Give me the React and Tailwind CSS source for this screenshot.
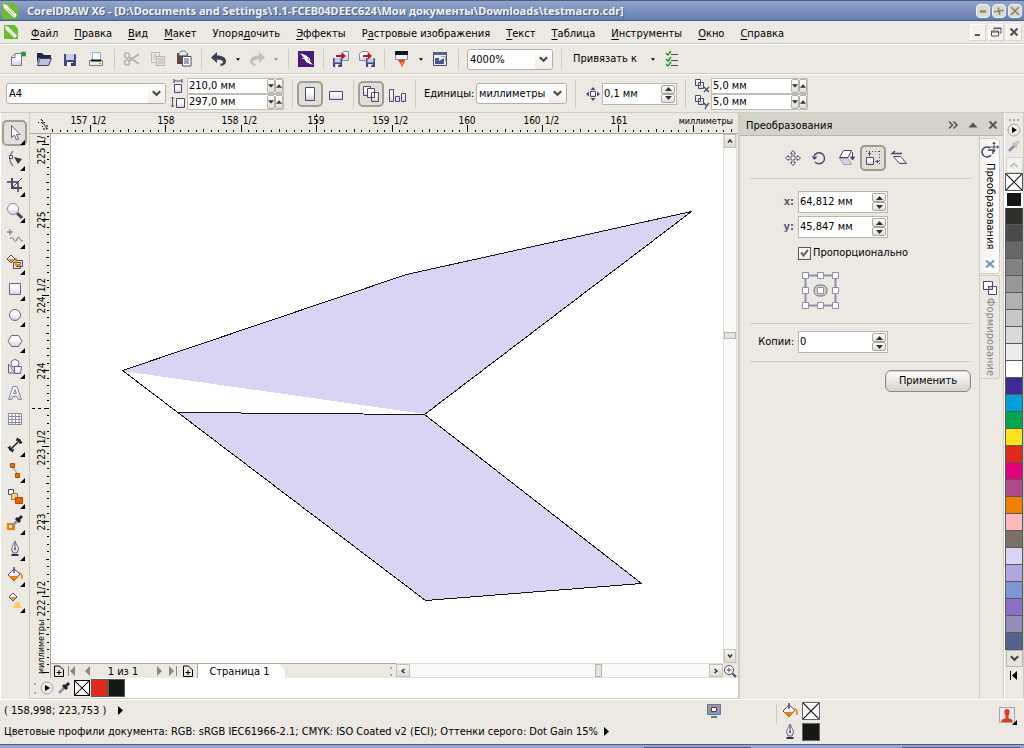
import React from "react";

const METAL = "url(#metal)";
const INK = "#4a4a6a";

function Ico({ size = 18, children, className = "" }) {
  return (
    <svg width={size} height={size} viewBox={`0 0 ${size} ${size}`} fill="none" className={`shrink-0 ${className}`} aria-hidden="true">
      {children}
    </svg>
  );
}

function Chevron({ className = "" }) {
  return (
    <svg width="9" height="7" viewBox="0 0 9 7" className={className} aria-hidden="true">
      <path d="M0.8 1.2 4.5 4.8 8.2 1.2" fill="none" stroke="#444" strokeWidth="2" />
    </svg>
  );
}

function Tri({ up, color = "#333", w = 7, h = 4 }) {
  return (
    <svg width={w} height={h} viewBox="0 0 7 4" aria-hidden="true">
      <path d={up ? "M0 4 3.5 0 7 4z" : "M0 0 3.5 4 7 0z"} fill={color} />
    </svg>
  );
}

function Sep({ className = "" }) {
  return <div className={`h-5 w-px shrink-0 bg-[#cfccc3] ${className}`} />;
}

function Tool({ label, children, className = "w-[26px]" }) {
  return (
    <button type="button" aria-label={label} className={`flex h-[26px] shrink-0 items-center justify-center ${className}`}>
      {children}
    </button>
  );
}

function Combo({ label, id, options, className = "" }) {
  return (
    <div className={`grid h-[21px] shrink-0 items-center rounded-[3px] border border-[#b2afa6] bg-white ${className}`}>
      <select id={id} aria-label={label} className="col-start-1 row-start-1 h-full w-full appearance-none bg-transparent pt-px pl-[2px] outline-none">
        {options.map((o) => (
          <option key={o}>{o}</option>
        ))}
      </select>
      <span className="pointer-events-none col-start-1 row-start-1 flex h-full w-[17px] items-center justify-center justify-self-end rounded-r-[3px] bg-gradient-to-b from-white to-[#f0eee9]">
        <Chevron />
      </span>
    </div>
  );
}

function SpinBox({ label, id, value, className = "" }) {
  return (
    <div className={`flex h-[22px] shrink-0 border border-[#bab7ae] bg-white p-px ${className}`}>
      <input id={id} aria-label={label} defaultValue={value} className="min-w-0 flex-1 bg-transparent outline-none" />
      <div className="flex w-[14px] flex-col">
        {[true, false].map((up) => (
          <button
            key={String(up)}
            type="button"
            aria-label={up ? "Увеличить" : "Уменьшить"}
            className="flex flex-1 items-center justify-center rounded-[2px] border border-[#a9a69d] bg-gradient-to-b from-white to-[#e0ddd6]"
          >
            <Tri up={up} />
          </button>
        ))}
      </div>
    </div>
  );
}

function WideSpin({ label, value }) {
  return (
    <div className="flex h-4 items-center border border-[#c1beb5] bg-white">
      <input aria-label={label} defaultValue={value} className="min-w-0 flex-1 bg-transparent pt-px pl-px leading-3 outline-none" />
      {[false, true].map((up) => (
        <button
          key={String(up)}
          type="button"
          aria-label={up ? "Увеличить" : "Уменьшить"}
          className="flex h-[14px] w-2 items-center justify-center rounded-[2px] border border-[#b2afa6] bg-gradient-to-b from-white to-[#e0ddd6]"
        >
          <Tri up={up} w={6} h={4} />
        </button>
      ))}
    </div>
  );
}

/* ---------- title and menu ---------- */

function Leaf({ size }) {
  return (
    <svg width={size} height={size} viewBox="0 0 16 16" className="shrink-0" aria-hidden="true">
      <path d="M0 0h12l4 4v12H0z" fill="#6cbd2c" />
      <path d="M1 1 5 2 14 11 15 15 11 14 2 5z" fill="#fff" />
      <path d="M4 5 12 13M5 3 13 11" stroke="#8fb874" strokeWidth=".7" />
      <path d="M13 15 15 15 15 13z" fill="#2f7d1a" />
    </svg>
  );
}

function TitleBar() {
  const icons = [
    ["Свернуть", "M3 6h6M3 7h6"],
    ["Восстановить", "M5.500 2.500v4H1M6.500 10V5.500H11"],
    ["Закрыть", "M2 2 10 10M10 2 2 10"],
  ];
  return (
    <header className="flex h-[21px] items-center border-t border-b border-[#4a5d87] bg-gradient-to-b from-[#93a5cb] via-[#7b90bc] to-[#6580ae] pr-[2px] pl-[2px]">
      <Leaf size={16} />
      <h1 className="min-w-0 flex-1 truncate pl-[9px] font-['Noto_Sans',sans-serif] text-[11px] font-bold text-[#f4f3ee] [text-shadow:1px_1px_0_#4a5d87]">
        CorelDRAW X6 - [D:\Documents and Settings\1.1-FCEB04DEEC624\Мои документы\Downloads\testmacro.cdr]
      </h1>
      <div className="flex gap-[2px]">
        {icons.map(([l, d]) => (
          <button key={l} type="button" aria-label={l} className="flex h-[14px] w-[14px] items-center justify-center rounded-[4px] border border-[#f4f2ec] bg-[#dcd9d1]">
            <Ico size={12}>
              <path d={d} stroke="#8b8778" strokeWidth="1.6" />
            </Ico>
          </button>
        ))}
      </div>
    </header>
  );
}

const MENU = [
  ["", "Ф", "айл"],
  ["", "П", "равка"],
  ["", "В", "ид"],
  ["", "М", "акет"],
  ["Упоря", "д", "очить"],
  ["", "Э", "ффекты"],
  ["Р", "а", "стровые изображения"],
  ["", "Т", "екст"],
  ["", "Т", "аблица"],
  ["", "И", "нструменты"],
  ["", "О", "кно"],
  ["", "С", "правка"],
];

function MenuBar() {
  const icons = [
    ["Свернуть документ", <path key="a" d="M3 9h5" stroke="#555" strokeWidth="2" />],
    ["Восстановить документ", <path key="b" d="M4 3.5V2h7v5H9.500M4 2.500h7M1.500 5h7v5h-7zM1.500 6h7" stroke="#555" />],
    ["Закрыть документ", <path key="c" d="M2.500 2.500 9.500 9.500M9.500 2.500 2.500 9.500" stroke="#555" strokeWidth="2.200" />],
  ];
  return (
    <nav className="flex h-[23px] items-center border-b border-[#cfccc3] pr-[2px] pl-1">
      <Leaf size={14} />
      <ul className="flex flex-1 items-center gap-4 pt-[3px] pl-[13px]">
        {MENU.map(([a, b, c]) => (
          <li key={a + b + c}>
            <button type="button" className="whitespace-nowrap">
              {a}
              <span className="underline underline-offset-2">{b}</span>
              {c}
            </button>
          </li>
        ))}
      </ul>
      <div className="flex gap-[2px]">
        {icons.map(([l, p]) => (
          <button key={l} type="button" aria-label={l} className="flex h-[17px] w-4 items-center justify-center border border-[#d8d5cd] border-t-white border-l-white bg-[#f5f3ee]">
            <Ico size={12}>{p}</Ico>
          </button>
        ))}
      </div>
    </nav>
  );
}

/* ---------- standard toolbar ---------- */

const floppy = (x, y, s = 1) => (
  <g transform={`translate(${x} ${y}) scale(${s})`}>
    <path d="M0 0h11l1 1v11H0z" fill="#3d4a86" />
    <path d="M2 0h8v6H2z" fill="#c9cde0" />
    <path d="M3 8h6v4H3z" fill="#fff" />
    <path d="M7 9h2v3H7z" fill="#222a55" />
  </g>
);

function StandardBar() {
  return (
    <div role="toolbar" aria-label="Стандарт" className="flex h-[30px] items-center border-t border-b border-t-white border-b-[#cfccc3] pl-[5px]">
      <Tool label="Создать">
        <Ico>
          <path d="M2.500 7 6 3.500h6.500v12h-10z" fill={METAL} stroke="#77778f" />
          <path d="M2.500 7.500H6V4" stroke="#77778f" />
          <circle cx="14.500" cy="4" r="2.500" fill="#2f9a2a" />
          <path d="M12 1.500 17 6.500M17 1.500 12 6.500" stroke="#2f9a2a" />
        </Ico>
      </Tool>
      <Tool label="Открыть">
        <Ico>
          <path d="M2 3h5l2 2h7v3H4L2 13z" fill="#20284a" />
          <path d="M5 8.500h11.500l-3 7H2.500z" fill="#b9bfdc" stroke="#3a4266" />
        </Ico>
      </Tool>
      <Tool label="Сохранить">
        <Ico>{floppy(3, 4)}</Ico>
      </Tool>
      <Tool label="Печать">
        <Ico>
          <path d="M5.500 2.500h8v8h-8z" fill="#f4fbfc" stroke="#8fb6bc" />
          <path d="M2.500 10.500h13v5h-13z" fill="#f0eee6" stroke="#77757a" />
          <path d="M4 10.500h10" stroke="#111" strokeWidth="2" />
          <path d="M12 13.500h2" stroke="#7dbb23" />
        </Ico>
      </Tool>
      <Sep className="mr-1 ml-[5px]" />
      <Tool label="Вырезать">
        <Ico>
          <circle cx="4" cy="5.500" r="2.500" stroke="#b5b3ae" strokeWidth="1.500" />
          <circle cx="4" cy="12.500" r="2.500" stroke="#b5b3ae" strokeWidth="1.500" />
          <path d="M6 7 16 14M6 11 16 4" stroke="#b5b3ae" strokeWidth="2" />
        </Ico>
      </Tool>
      <Tool label="Копировать">
        <Ico>
          <path d="M2.500 2.500h8v10h-8zM4 5h4M4 7h4M4 9h3" stroke="#c0beb9" />
          <path d="M7.500 6.500h8v9h-8z" fill="#e4e2dc" stroke="#b5b3ae" />
          <path d="M9 9h5M9 11h5M9 13h5" stroke="#b5b3ae" />
        </Ico>
      </Tool>
      <Tool label="Вставить">
        <Ico>
          <path d="M2 3h11v11H2z" fill="#5f4a3a" />
          <path d="M4 3.500 6 1h4l2 2.500v2H4z" fill="#e3efe6" stroke="#789" />
          <path d="M7.500 6.500H16v9.500H7.500z" fill="#fff" stroke={INK} />
          <path d="M9 9h5M9 11h5M9 13h5" stroke={INK} />
        </Ico>
      </Tool>
      <Sep className="mr-1 ml-[4px]" />
      <Tool label="Отменить">
        <Ico>
          <path d="M1 7.500 7 2v3.500c6 0 9 2.500 9 6 0 2.500-2 4-5.500 4.500v-2c2-.5 2.500-1.300 2.500-2.200C13 10.500 11 9.500 7 9.500V13z" fill="#3d4158" />
        </Ico>
      </Tool>
      <Tool label="Список отмены" className="w-3"><Tri w={4} h={3} color="#000" /></Tool>
      <Tool label="Вернуть">
        <Ico>
          <path d="M17 7.500 11 2v3.500c-6 0-9 2.500-9 6 0 2.500 2 4 5.500 4.500v-2c-2-.5-2.500-1.300-2.500-2.200C5 10.500 7 9.500 11 9.500V13z" fill="#c2c1be" />
        </Ico>
      </Tool>
      <Tool label="Список возврата" className="w-3"><Tri w={4} h={3} color="#888" /></Tool>
      <Sep className="mr-1 ml-[6px]" />
      <Tool label="Поиск содержимого">
        <Ico>
          <path d="M1 1h16v16H1z" fill="#4a1a78" />
          <path d="M3 3l5 2 2 1 1 3 5 6-5-2-2-1-1-3z" fill="#fff" />
          <path d="M5 8l3 1 1 2M9 7l3 1 1 3" stroke="#fff" />
        </Ico>
      </Tool>
      <Sep className="mr-1 ml-[4px]" />
      <Tool label="Импорт">
        <Ico>
          <path d="M9.500 3.500 12 1.500h4.500v9h-7z" fill={METAL} stroke="#8a8aa0" />
          {floppy(1, 8, 0.75)}
          <path d="M4 5h6V2.500L14 6l-4 3.500V7H4z" fill="#c2151b" />
        </Ico>
      </Tool>
      <Tool label="Экспорт">
        <Ico>
          <path d="M1.500 3.500 4 1.500h6v9H1.500z" fill={METAL} stroke="#8a8aa0" />
          {floppy(8, 8, 0.75)}
          <path d="M5 5h5V2.500L14 6l-4 3.500V7H5z" fill="#c2151b" />
        </Ico>
      </Tool>
      <Sep className="mr-1 ml-[4px]" />
      <Tool label="Запуск приложений">
        <Ico>
          <path d="M2.500 1.500h12v8h-12z" fill="#f4f4fa" stroke="#8a8aa0" />
          <path d="M2 1h13v4H2z" fill="#16161c" />
          <path d="M5 10h7l-1 3-2 4-2-4z" fill="#e8391d" />
          <path d="M8 12h2l-1 4z" fill="#ffd226" />
        </Ico>
      </Tool>
      <Tool label="Список приложений" className="w-3"><Tri w={4} h={3} color="#000" /></Tool>
      <Tool label="Экран приветствия">
        <Ico>
          <path d="M2.500 2.500h13v13h-13z" fill="#f4f4fa" stroke={INK} />
          <path d="M2 2h14v3H2z" fill="#56608c" />
          <path d="M4 8h4v3l5-3v6H4z" fill="#4a5794" />
          <path d="M10 6.500h4.500V11" stroke="#8fa0c8" />
        </Ico>
      </Tool>
      <Sep className="mr-2 ml-[5px]" />
      <Combo label="Масштаб" options={["4000%", "400%", "100%"]} className="w-[86px]" />
      <Sep className="mr-[11px] ml-2" />
      <button type="button" className="flex w-[82px] items-center justify-between whitespace-nowrap">
        Привязать к
        <Tri w={4} h={3} color="#000" />
      </button>
      <Tool label="Параметры" className="ml-1 w-[26px]">
        <Ico>
          <path d="M8 4.500h7M8 10.500h7M8 15.500h7" stroke={INK} />
          <path d="M3 3l2 2 3-4M3 9l2 2 3-4M3 14l2 2 3-4" stroke="#2f9a2a" strokeWidth="1.500" />
        </Ico>
      </Tool>
    </div>
  );
}

/* ---------- property bar ---------- */

function PropertyBar() {
  const on = "w-[26px] rounded-[5px] border-2 border-[#a19e97] bg-[#e2dfd8]";
  return (
    <div role="toolbar" aria-label="Панель свойств" className="flex h-[39px] items-center border-t border-b border-t-white border-b-[#cfccc3] pl-[6px]">
      <Combo label="Размер страницы" options={["A4", "A3", "A5"]} className="w-[160px]" />
      <div className="ml-[4px] flex flex-col">
        <Ico size={16}>
          <path d="M4 1v4M12 1v4M4 3h8" stroke={INK} />
          <path d="M4.500 6.500h7v8h-7z" fill={METAL} stroke={INK} />
        </Ico>
        <Ico size={16}>
          <path d="M2.500 3v10M1 4.500 2.500 3 4 4.500M1 11.500 2.500 13 4 11.500" stroke={INK} />
          <path d="M6.500 4.500h8v9h-8z" fill={METAL} stroke={INK} />
        </Ico>
      </div>
      <div className="ml-px w-[97px]">
        <WideSpin label="Ширина страницы" value="210,0 мм" />
        <WideSpin label="Высота страницы" value="297,0 мм" />
      </div>
      <Sep className="mr-1 ml-2 h-7" />
      <Tool label="Книжная" className={on}>
        <Ico>
          <path d="M4.500 2.500h9v13h-9z" fill={METAL} stroke={INK} />
        </Ico>
      </Tool>
      <Tool label="Альбомная">
        <Ico>
          <path d="M2.500 6.500h13v8h-13z" fill={METAL} stroke={INK} />
        </Ico>
      </Tool>
      <Sep className="mr-1 ml-1 h-7" />
      <Tool label="Все страницы" className={on}>
        <Ico>
          <path d="M1.500 1.500h7v9h-7z" fill={METAL} stroke={INK} />
          <path d="M5.500 3.500h7v9h-7zM9.500 7.500h7v9h-7z" fill={METAL} stroke={INK} />
        </Ico>
      </Tool>
      <Tool label="Текущая страница">
        <Ico>
          <path d="M1.500 4.500h4v12h-4zM7.500 11.500h4v5h-4zM13.500 8.500h4v8h-4z" fill={METAL} stroke={INK} />
        </Ico>
      </Tool>
      <Sep className="mr-2 ml-[5px] h-7" />
      <label htmlFor="units" className="w-[52px] whitespace-nowrap">
        Единицы:
      </label>
      <Combo id="units" label="Единицы" options={["миллиметры", "дюймы"]} className="w-[91px]" />
      <Sep className="mr-[10px] ml-2 h-7" />
      <Ico size={14}>
        <path d="M4.500 4.500h5v5h-5z" fill={METAL} stroke={INK} />
        <path d="M7 0l2.500 3h-5zM7 14l2.500-3h-5zM0 7l3-2.500v5zM14 7l-3-2.500v5z" fill={INK} />
      </Ico>
      <SpinBox label="Шаг перемещения" value="0,1 мм" className="ml-[2px] w-[75px]" />
      <Sep className="mr-2 ml-2 h-7" />
      <div className="flex flex-col">
        {["M10 9l5 5M15 9l-5 5", "M10 9l2.500 3L15 9M12.500 12 11 15"].map((d) => (
          <Ico key={d} size={16}>
            <path d="M1.500 1.500h5v6h-5zM4.500 4.500h5v6h-5z" fill={METAL} stroke={INK} />
            <path d={d} stroke={INK} strokeWidth="1.300" />
          </Ico>
        ))}
      </div>
      <div className="ml-px w-[97px]">
        <WideSpin label="Дублирование по X" value="5,0 мм" />
        <WideSpin label="Дублирование по Y" value="5,0 мм" />
      </div>
    </div>
  );
}

/* ---------- toolbox ---------- */

const bucket = (
  <>
    <path d="M2 9 8 3l6 5-6 7z" fill={METAL} stroke={INK} />
    <path d="M3 10h10l-5 5z" fill="#f08000" />
    <path d="M8 1v6" stroke={INK} strokeWidth="1.500" />
    <path d="M13 7c3 0 3 2 3 6" stroke="#f08000" strokeWidth="1.500" />
  </>
);
const nib = (
  <>
    <path d="M9 1c1 3 3.500 6 3.500 8L11 13H7L5.500 9C5.500 7 8 4 9 1z" fill={METAL} stroke="#66667e" />
    <path d="M9 3v6" stroke={INK} />
    <circle cx="9" cy="9" r="1" fill={INK} />
    <path d="M5.500 15h7" stroke="#333346" strokeWidth="2" />
  </>
);

const TOOLS = [
  ["Указатель", true, <path key="p" d="M5.500 1.500v12l3-2.500 2 5 2-1-2-4.500H14z" fill="#fff" stroke="#66667e" />],
  ["Форма", true, <g key="p"><path d="M7 1C3 5 3 12 7 16" stroke="#8a8aa0" strokeWidth="1.500" /><path d="M3.500 5.500h3v3h-3z" fill="#fff" stroke={INK} /><path d="M8 7l8 2-4 5z" fill="#333648" /></g>],
  ["Обрезка", true, <g key="p"><path d="M1 6h11v10" stroke="#66667e" strokeWidth="2" /><path d="M6 2v10h10" stroke={INK} strokeWidth="2" /><path d="M16 2 6 12" stroke={INK} /></g>],
  ["Масштаб", true, <g key="p"><path d="M11 11 16 16" stroke="#444458" strokeWidth="3" /><circle cx="7" cy="7" r="5.500" fill={METAL} stroke="#8a8aa0" /></g>],
  ["Свободная форма", true, <path key="p" d="M4 1v6M1 4h6M4 11c2-3 3-1 4 1s2 2 3-1 2-2 3 0 2 3 3 1" stroke="#66667e" />],
  ["Интеллектуальная заливка", true, <g key="p"><path d="M7.500 8.500h7v6h-7zM10.500 6.500h6v6h-6z" stroke={INK} /><path d="M10 4v7h5" stroke="#f08000" strokeWidth="2" /><path d="M1 5 5 1l4 4-4 4z" fill={METAL} stroke={INK} /><path d="M2 5h6L5 8z" fill="#f08000" /></g>],
  ["Прямоугольник", true, <path key="p" d="M3.500 3.500h11v11h-11z" fill={METAL} stroke="#66667e" />],
  ["Эллипс", true, <circle key="p" cx="9" cy="9" r="5.500" fill={METAL} stroke="#66667e" />],
  ["Многоугольник", true, <path key="p" d="M5.500 3.500h7l3.500 5.500-3.500 5.500h-7L2 9z" fill={METAL} stroke="#66667e" />],
  ["Основные фигуры", true, <g key="p"><path d="M2.500 6v9L9 15z" fill={METAL} stroke="#66667e" /><circle cx="9" cy="5.500" r="4" fill={METAL} stroke="#66667e" /><path d="M8.500 8.500h7l-1 7h-6z" fill={METAL} stroke="#66667e" /></g>],
  ["Текст", false, <path key="p" d="M2.500 15.500 7 2.500h4l4.500 13h-3.300l-1-3H6.800l-1 3zM7.700 9.700h2.600L9 5.500z" fill={METAL} stroke="#8a8aa0" />],
  ["Таблица", false, <path key="p" d="M2.500 3.500h13v11h-13zM2.500 6.500h13M2.500 9.500h13M2.500 12.500h13M6 3.500v11M9.500 3.500v11M13 3.500v11" fill="#fff" stroke="#8a8aa0" />],
  ["Размер", true, <path key="p" d="M2 11l5 5M11 2l5 5M4 14 14 4M4 10v4h4M10 4h4v4" stroke="#22222e" strokeWidth="1.500" />],
  ["Соединитель", true, <g key="p"><path d="M6 5 13 13" stroke="#8a8aa0" /><path d="M4.500 1.500h4v4h-4zM9.500 11.500h4v4h-4z" fill="#f26a00" stroke="#a85200" /></g>],
  ["Перетекание", true, <g key="p"><path d="M2.500 1.500h5v5h-5z" fill="#fff" stroke={INK} /><path d="M5.500 5.500h6v6h-6z" fill="#ffcf7a" stroke="#8a7a60" /><path d="M9.500 9.500h7v6h-7z" fill="#f25a00" stroke="#a85200" /></g>],
  ["Пипетка", true, <g key="p"><path d="M1 9h8v7H1z" fill="#f08000" /><path d="M3 11h3v3H3z" fill="#ffd9a0" /><path d="M6 12 12 6" stroke="#8a8fa5" strokeWidth="2.500" /><path d="M10 4 14 8M12 6 16 2" stroke="#22222e" strokeWidth="3" /></g>],
  ["Абрис", true, nib],
  ["Заливка", true, bucket],
  ["Интерактивная заливка", true, <g key="p"><path d="M3 5 7 1l4 4-4 4z" fill={METAL} stroke={INK} /><path d="M4 5h6L7 8z" fill="#f08000" /><path d="M10 10h3l3 6H7z" fill="#fbd05f" /></g>],
];

function Toolbox() {
  return (
    <aside aria-label="Набор инструментов" className="w-[30px] shrink-0 border-r border-l border-r-[#cfccc3] border-l-white pt-[7px]">
      {TOOLS.map(([label, flyout, art], i) => (
        <button
          key={label}
          type="button"
          aria-label={label}
          className={`relative ml-px flex h-[26px] w-[25px] items-center justify-center ${i === 0 ? "rounded-[5px] border-2 border-[#a19e97] bg-[#e2dfd8]" : ""}`}
        >
          <Ico>{art}</Ico>
          {flyout && (
            <svg width="5" height="5" viewBox="0 0 5 5" className={`absolute ${i === 0 ? "right-0 -bottom-px" : "right-[2px] bottom-px"}`} aria-hidden="true">
              <path d="M5 0v5H0z" fill="#000" />
            </svg>
          )}
        </button>
      ))}
    </aside>
  );
}

/* ---------- rulers ---------- */

const STEP = 75.4;

function ticks(origin, from, to) {
  const out = [];
  for (let i = -40; i < 260; i++) {
    const p = Math.round(origin + (i * STEP) / 10);
    if (p < from || p > to) continue;
    out.push([p, i % 10 === 0 ? 7 : i % 5 === 0 ? 3 : 2]);
  }
  return out;
}

function TopRuler() {
  const labels = [
    [28, "157"], [48, "1/2"], [115, "158"], [179, "158"], [199, "1/2"], [265, "159"],
    [330, "159"], [350, "1/2"], [416, "160"], [481, "160"], [501, "1/2"], [568, "161"],
  ];
  return (
    <svg className="h-5 min-w-0 flex-1 text-[10px]" role="img" aria-label="Горизонтальная линейка">
      {ticks(39, 1, 687).map(([x, h]) => (
        <path key={x} d={`M${x}.5 ${19 - h}v${h}`} stroke="#000" />
      ))}
      {labels.map(([x, t]) => (
        <text key={x} x={x} y="11" textAnchor="middle">
          {t}
        </text>
      ))}
      <text x="682" y="11" textAnchor="end" className="text-[9px]">миллиметры</text>
      <path d="M265.500 1v18" stroke="#000" strokeDasharray="3 3" />
    </svg>
  );
}

function SideRuler() {
  const labels = [
    [22, "225"], [6, "1/"], [86, "225"], [171, "224"], [151, "1/2"], [237, "224"],
    [323, "223"], [303, "1/2"], [388, "223"], [474, "222"], [454, "1/2"],
  ];
  return (
    <svg className="min-h-[542px] w-[21px] shrink-0 border-r border-[#aca899] text-[10px]" role="img" aria-label="Вертикальная линейка">
      {ticks(10, 1, 541).map(([y, w]) => (
        <path key={y} d={`M${19 - w} ${y}.5h${w}`} stroke="#000" />
      ))}
      {labels.map(([y, t]) => (
        <text key={y} transform={`translate(15 ${y}) rotate(-90)`} textAnchor="middle">
          {t}
        </text>
      ))}
      <text transform="translate(14 540) rotate(-90)" className="text-[9px]">миллиметры</text>
      <path d="M2 274.500h17" stroke="#000" strokeDasharray="3 3" />
    </svg>
  );
}

/* ---------- workspace ---------- */

const SCROLL_BTN = "flex shrink-0 items-center justify-center border border-[#c6c3bb] bg-gradient-to-b from-[#f6f4f0] to-[#dedbd4]";

function Arrow({ d }) {
  return (
    <svg width="6" height="6" viewBox="0 0 6 6" aria-hidden="true">
      <path d={d} fill="none" stroke="#333" strokeWidth="1.500" />
    </svg>
  );
}

function VScroll() {
  return (
    <div className="flex w-[14px] shrink-0 flex-col border-x border-[#e0ddd6] bg-[#faf9f9]">
      <button type="button" aria-label="Прокрутить вверх" className={`${SCROLL_BTN} h-[14px]`}>
        <Arrow d="M1 4.500 3 2l2 2.500" />
      </button>
      <div className="flex-[184]" />
      <div className="h-[7px] border border-[#b9b6ae] bg-[#e6e3dd]" />
      <div className="flex-[309]" />
      <button type="button" aria-label="Прокрутить вниз" className={`${SCROLL_BTN} h-[14px]`}>
        <Arrow d="M1 1.500 3 4l2-2.500" />
      </button>
    </div>
  );
}

function Canvas() {
  return (
    <div className="relative min-w-0 flex-1 bg-white">
      <svg className="absolute inset-0 h-full w-full" role="img" aria-label="Рисунок" shapeRendering="crispEdges">
        <path d="M71 237 355 140 640 77 374 280z" fill="#d9d4f3" />
        <path d="M127 278 374 280 590 449 375 466z" fill="#d9d4f3" />
        <path d="M71.500 236.500 355.500 140.500 640.500 77.500 373.500 280.500 590.500 449.500 374.500 466.500zM127.500 278.500 373.500 280.500" fill="none" stroke="#161616" />
      </svg>
    </div>
  );
}

function PageButton({ label, d, page }) {
  return (
    <button type="button" aria-label={label} className="flex h-[14px] w-[15px] items-center justify-center">
      <Ico size={12}>
        {page ? <path d="M1.500 1h5l4 4v6.500h-9zM6 5v5M3.500 7.500h5" stroke="#000" /> : <path d={d} fill="#8b8982" />}
      </Ico>
    </button>
  );
}

function PageNav() {
  return (
    <div className="flex h-[15px] items-stretch">
      <div className="flex min-w-0 flex-1 items-center border-t border-[#aca899]">
        <PageButton label="Добавить страницу" page />
        <PageButton label="Первая страница" d="M0 1h1v10H0zM7 1v10L2 6z" />
        <PageButton label="Предыдущая страница" d="M7 1v10L2 6z" />
        <span className="w-[54px] pt-px text-center">1 из 1</span>
        <PageButton label="Следующая страница" d="M5 1v10l5-5z" />
        <PageButton label="Последняя страница" d="M9 1h1v10H9zM2 1v10l5-5z" />
        <PageButton label="Добавить страницу в конец" page />
        <button type="button" className="ml-[2px] h-[14px] w-[88px] border-l border-[#aca899] bg-white pr-1 leading-[13px] [clip-path:polygon(0_0,82px_0,88px_6px,88px_14px,0_14px)]">
          Страница 1
        </button>
        <span className="flex-1" />
        <span className="mr-1 h-[9px] w-[2px] border-y-2 border-[#aca899]" />
      </div>
      <div className="flex w-[327px] shrink-0 border-y border-[#e0ddd6] bg-[#faf9f9]">
        <button type="button" aria-label="Прокрутить влево" className={`${SCROLL_BTN} w-[14px]`}>
          <Arrow d="M4.500 1 2 3l2.500 2" />
        </button>
        <div className="flex-[184]" />
        <div className="w-[7px] border border-[#b9b6ae] bg-[#e6e3dd]" />
        <div className="flex-[107]" />
        <button type="button" aria-label="Прокрутить вправо" className={`${SCROLL_BTN} w-[14px]`}>
          <Arrow d="M1.500 1 4 3 1.500 5" />
        </button>
      </div>
      <button type="button" aria-label="Навигатор" className="flex w-[14px] shrink-0 items-center justify-center">
        <Ico size={14}>
          <circle cx="6" cy="6" r="4.500" fill="#fff" stroke={INK} />
          <path d="M6 3.500v5M3.500 6h5" stroke={INK} />
          <path d="M9.500 9.500 13 13" stroke={INK} strokeWidth="2" />
        </Ico>
      </button>
    </div>
  );
}

function PlayDot() {
  return (
    <Ico size={14}>
      <circle cx="7" cy="7" r="6" fill="#eceae6" stroke="#aaa79f" />
      <path d="M5 4v6l5-3z" fill="#000" />
    </Ico>
  );
}

function Dropper({ color = "#22223a" }) {
  return (
    <Ico size={14}>
      <path d="M2 12 8 6" stroke="#8a8fa5" strokeWidth="2.500" />
      <path d="M6 4 10 8M8 6 12 2" stroke={color} strokeWidth="3" />
    </Ico>
  );
}

function NoColor() {
  return (
    <svg viewBox="0 0 16 16" className="block h-full w-full bg-white" preserveAspectRatio="none" aria-hidden="true">
      <path d="M0 0 16 16M16 0 0 16" stroke="#111" strokeWidth="1.200" />
    </svg>
  );
}

function DocPalette() {
  return (
    <div className="flex h-[21px] items-center border-b border-[#cfccc3] bg-white">
      <div className="flex h-full items-center bg-[#ece9e2] pl-1">
        <span className="mr-1 h-[11px] w-[2px] border-y-2 border-[#aca899]" />
        <button type="button" aria-label="Меню палитры"><PlayDot /></button>
        <button type="button" aria-label="Пипетка палитры" className="ml-[3px]"><Dropper /></button>
        <button type="button" aria-label="Нет цвета" className="mr-px ml-[3px] h-4 w-4 border border-black"><NoColor /></button>
      </div>
      <button type="button" aria-label="Красный" className="h-[18px] w-[17px] border border-[#5a5a5a] bg-[#df2a1c]" />
      <button type="button" aria-label="Чёрный" className="h-[18px] w-[17px] border border-[#5a5a5a] bg-[#161816]" />
    </div>
  );
}

function Workspace() {
  return (
    <section className="flex min-w-0 flex-1 flex-col border-r-2 border-[#cfccc3]">
      <div className="flex h-[21px] border-b border-[#aca899] pr-[2px]">
        <svg width="21" height="20" viewBox="0 0 21 20" fill="none" className="shrink-0" aria-hidden="true">
          <path d="M11 6 17 16M17 12v4h-4" stroke="#000" strokeDasharray="2 1" />
          <path d="M8 9.500h9M12.500 7v9" stroke="#000" strokeDasharray="1 2" />
        </svg>
        <TopRuler />
      </div>
      <div className="flex flex-1">
        <SideRuler />
        <div className="flex min-w-0 flex-1 flex-col pr-px">
          <div className="flex flex-1">
            <Canvas />
            <VScroll />
          </div>
          <PageNav />
        </div>
      </div>
      <DocPalette />
    </section>
  );
}

/* ---------- docker ---------- */

function Field({ id, label, value, bold }) {
  return (
    <div className="flex items-center">
      <label htmlFor={id} className={`w-11 pr-1 text-right ${bold ? "font-bold text-[#5b5b78]" : ""}`}>
        {label}
      </label>
      <SpinBox id={id} label={label} value={value} className="w-[90px]" />
    </div>
  );
}

function Docker() {
  const handles = [4, 19, 34];
  return (
    <section aria-label="Преобразования" className="flex w-[264px] shrink-0 flex-col border-r border-[#cfccc3]">
      <header className="flex h-[23px] items-center gap-2 border-b border-[#b9b6ad] bg-[#d5d2ca] pt-[2px] pr-1 pl-[6px]">
        <h2 className="flex-1 pt-px">Преобразования</h2>
        <button type="button" aria-label="Свернуть панель"><Ico size={12}><path d="M2 2.500 5.500 6 2 9.500M6.500 2.500 10 6 6.500 9.500" stroke="#555" strokeWidth="1.500" /></Ico></button>
        <button type="button" aria-label="Поднять панель"><Ico size={12}><path d="M1.500 8.500h9L6 3.500z" fill="#555" /></Ico></button>
        <button type="button" aria-label="Закрыть панель"><Ico size={12}><path d="M2.500 2.500l7 7M9.500 2.500l-7 7" stroke="#555" strokeWidth="1.800" /></Ico></button>
      </header>
      <div className="flex flex-1">
        <div className="min-w-0 flex-1 pr-2 pl-[10px]">
          <div className="flex h-[43px] items-center border-b border-[#cfccc3] pt-[2px] pl-[30px]">
            <Tool label="Положение">
              <Ico><path d="M9 1.500l2.500 3H10v3.500h3.500V6.500l3 2.500-3 2.500V10H10v3.500h1.500L9 16.500l-2.500-3H8V10H4.500v1.500L1.500 9l3-2.500V8H8V4.500H6.500z" fill="#fff" stroke="#55556e" /></Ico>
            </Tool>
            <Tool label="Поворот">
              <Ico><path d="M4 7a5.500 5.500 0 1 1 1 6" stroke={INK} strokeWidth="1.400" /><path d="M1.500 7.500h6L4.500 11z" fill={INK} /></Ico>
            </Tool>
            <Tool label="Масштаб и отражение" className="w-7">
              <Ico><path d="M6.500 1.500h8L11 8.500H2.500z" fill="#fff" stroke={INK} /><path d="M2.500 9.500H11l3.500 6h-8z" fill="#d4d4e4" stroke="#a2a2b8" /><path d="M15.500 3v6M13.500 8l2 3 2-3z" stroke={INK} fill={INK} /></Ico>
            </Tool>
            <Tool label="Размер" className="w-[26px] rounded-[5px] border-2 border-[#9c9991] bg-[#e2dfd8]">
              <Ico><path d="M2.500 8.500h7v7h-7z" fill={METAL} stroke={INK} /><path d="M2 2.500h14M15.500 2v14" stroke={INK} strokeDasharray="1 2" /><path d="M5.500 7V3M4 4.500h3M11 12.500h4M13.500 11v3" stroke={INK} /></Ico>
            </Tool>
            <Tool label="Наклон">
              <Ico><path d="M3.500 7.500h7l6 7h-7z" fill={METAL} stroke={INK} /><path d="M12 4.500H3M5 2 2 4.500h3" stroke={INK} strokeWidth="1.400" /></Ico>
            </Tool>
          </div>
          <div className="flex flex-col gap-[3px] border-b border-[#cfccc3] pt-3 pb-[13px] pl-1">
            <Field id="pos-x" label="x:" value="64,812 мм" bold />
            <Field id="pos-y" label="y:" value="45,847 мм" bold />
            <div className="ml-11 flex flex-col gap-[9px] pt-[3px]">
              <label className="flex h-[18px] items-center gap-[2px]">
                <input
                  type="checkbox"
                  defaultChecked
                  className="h-[13px] w-[13px] appearance-none border border-[#555] bg-white checked:bg-[linear-gradient(#fff,#eceae6)]"
                />
                <svg width="9" height="8" viewBox="0 0 9 8" className="pointer-events-none -ml-[13px] mr-[2px]" aria-hidden="true">
                  <path d="M1 3.500 3.500 6.500 8 1" fill="none" stroke="#666" strokeWidth="2" />
                </svg>
                Пропорционально
              </label>
              <svg width="39" height="39" viewBox="0 0 39 39" className="ml-[3px]" role="img" aria-label="Точка привязки">
                <path d="M4.500 4.500h30v30h-30z" fill="none" stroke="#8f8fa8" strokeWidth="2" />
                <rect x="13" y="14" width="13" height="11" rx="5" fill="#d0cdc6" stroke="#77746c" />
                {handles.map((y) => handles.map((x) => <path key={`${x}-${y}`} d={`M${x - 3 + 0.5} ${y - 3 + 0.5}h6v6h-6z`} fill="#fff" stroke="#8f8fa8" />))}
              </svg>
            </div>
          </div>
          <div className="border-b border-[#cfccc3] pt-[7px] pb-2 pl-1">
            <Field id="copies" label="Копии:" value="0" />
          </div>
          <div className="flex justify-end pt-2">
            <button type="button" className="h-[22px] w-[86px] rounded-[6px] border border-[#8f8c85] bg-gradient-to-b from-white to-[#d5d2cb] leading-4 shadow-[inset_0_0_0_1px_#d9d6d0]">
              Применить
            </button>
          </div>
        </div>
        <div role="tablist" className="flex w-6 shrink-0 flex-col border-l border-[#cfccc3] pt-[2px] pr-[3px]">
          <div className="flex h-[136px] flex-col items-center justify-between rounded-r-[5px] border-y border-r border-[#cfccc3] bg-gradient-to-r from-[#f3f1ec] to-white py-[3px] pl-px">
            <button type="button" role="tab" aria-selected="true" className="flex flex-col items-center gap-[3px]">
              <Ico size={18}>
                <path d="M9 6a5 5 0 1 0 1 7" stroke={INK} strokeWidth="1.500" />
                <path d="M7 8h5v4" stroke={INK} strokeWidth="1.500" />
                <path d="M13 0v10M8.500 5h9" stroke={INK} />
                <path d="M13 0l2 2h-4zM18 5l-2-2v4zM13 10l2-2h-4z" fill={INK} />
              </Ico>
              <span className="[writing-mode:vertical-rl]">Преобразования</span>
            </button>
            <button type="button" aria-label="Закрыть вкладку" className="bg-white">
              <Ico size={12}><path d="M2 2.500l8 7M10 2.500l-8 7" stroke="#7b96c2" strokeWidth="2.200" /></Ico>
            </button>
          </div>
          <button type="button" role="tab" aria-selected="false" className="mt-px flex h-[104px] flex-col items-center gap-[2px] rounded-r-[4px] border border-l-0 border-[#cfccc3] pt-1 text-[#86847e]">
            <Ico size={16}>
              <path d="M1.500 1.500h9v8h-9zM6.500 6.500h8v8h-8z" fill="#fff" stroke={INK} />
              <path d="M6.500 6.500h4v3h-4z" fill="#c9c9dc" stroke={INK} />
            </Ico>
            <span className="[writing-mode:vertical-rl]">Формирование</span>
          </button>
        </div>
      </div>
    </section>
  );
}

/* ---------- colour palette ---------- */

const SWATCHES = [
  "#161816", "#2f2f2d", "#4b4b4b", "#676765", "#828282", "#989898", "#b0b1b3", "#c5c7c6", "#d9dbda", "#ececec",
  "#ffffff", "#3e2a97", "#00a0d6", "#00a650", "#fce21a", "#df2a1c", "#e5007e", "#b04a8a", "#f08000", "#ffb9bc",
  "#7d7064", "#dad4f4", "#b1a5e1", "#7b96d2", "#8a70c6", "#948cb6", "#52648c",
];

function Palette() {
  return (
    <aside aria-label="Палитра" className="flex w-5 shrink-0 flex-col items-center border-r border-l border-r-[#cfccc3] border-l-white pt-1">
      <span className="flex h-[5px] w-[10px] items-center justify-between">
        {[0, 1, 2].map((i) => <i key={i} className="h-[2px] w-[2px] bg-[#aca899]" />)}
      </span>
      <button type="button" aria-label="Меню" className="mt-px"><PlayDot /></button>
      <button type="button" aria-label="Пипетка" className="mt-[2px]"><Dropper color="#c4c2bd" /></button>
      <button type="button" aria-label="Прокрутить палитру вверх" className="mt-1 flex h-4 w-[17px] items-center justify-center border border-[#d8d5cd] bg-[#f4f2ee]">
        <Ico size={10}><path d="M1.500 7 5 3.500 8.500 7" stroke="#c4c2bd" strokeWidth="1.800" /></Ico>
      </button>
      <button type="button" aria-label="Нет цвета" className="h-[18px] w-[18px] border border-[#5a5a5a]"><NoColor /></button>
      {SWATCHES.map((c, i) => (
        <button
          key={c}
          type="button"
          aria-label={c}
          className={`h-[17px] w-[18px] ${i === 0 ? "border-2 border-white" : "border-x border-b border-[#5a5a5a]"}`}
          style={{ backgroundColor: c }}
        />
      ))}
      <button type="button" aria-label="Прокрутить палитру вниз" className="flex h-[17px] w-[17px] items-center justify-center border border-[#b9b6ae] bg-[#e6e3df]"><Chevron /></button>
      <button type="button" aria-label="Развернуть палитру" className="mt-1">
        <Ico size={10}><path d="M1 0h1v9H1zM8 0v9L3 4.500z" fill="#000" /></Ico>
      </button>
    </aside>
  );
}

/* ---------- status bar ---------- */

function StatusBar() {
  const play = (
    <svg width="5" height="9" viewBox="0 0 5 9" aria-hidden="true"><path d="M0 0v9l5-4.500z" fill="#000" /></svg>
  );
  return (
    <footer className="flex h-[45px] border-t border-white pl-1 whitespace-nowrap">
      <div className="flex min-w-0 flex-1 flex-col">
        <div className="flex h-[21px] items-center">
          <span className="pr-3">( 158,998; 223,753 )</span>
          {play}
          <span className="flex-1" />
          <Ico size={16} className="mr-[54px]">
            <path d="M1.500 1.500h13v10h-13z" fill="#7d9bd0" stroke="#67769a" />
            <path d="M3 3h10v3H3z" fill="#e08080" />
            <path d="M3 6h4v4H3z" fill="#5fae6a" />
            <path d="M5.500 4.500h5v4h-5z" fill="#fff" stroke="#445" />
            <path d="M5 14h6" stroke="#67769a" strokeWidth="2" />
          </Ico>
        </div>
        <div className="flex h-[21px] items-center gap-[6px]">
          <span>Цветовые профили документа: RGB: sRGB IEC61966-2.1; CMYK: ISO Coated v2 (ECI); Оттенки серого: Dot Gain 15%</span>
          {play}
        </div>
      </div>
      <div className="flex w-[248px] shrink-0 items-start justify-between pt-[2px]">
        <Sep className="mt-[2px] h-3" />
        <div className="ml-1 grid flex-1 grid-cols-[21px_18px] items-center gap-y-[3px]">
          <Ico>{bucket}</Ico>
          <span className="h-[18px] border border-[#666]"><NoColor /></span>
          <Ico>{nib}</Ico>
          <span className="h-[18px] border border-[#666] bg-[#161816]" />
        </div>
        <button type="button" aria-label="Пользователь" className="mt-[5px] mr-[7px]">
          <Ico size={18}>
            <path d="M.5.500h15v15H.5z" fill="#e8e8ee" stroke="#a5a5ad" />
            <path d="M8 2c2 0 3 1.500 2.500 4L9.500 9v2l4 2v2h-11v-2l4-2V9L5.500 6C5 3.500 6 2 8 2z" fill="#d8401c" />
            <path d="M18 13v5h-5z" fill="#000" />
          </Ico>
        </button>
      </div>
    </footer>
  );
}

export default function App() {
  return (
    <div className="flex min-h-screen flex-col overflow-x-hidden bg-[#ece9e2] font-['DejaVu_Sans_Condensed','Noto_Sans',sans-serif] text-[11px] leading-[14px] text-black">
      <svg width="0" height="0" className="absolute" aria-hidden="true">
        <defs>
          <linearGradient id="metal" x1="0" y1="0" x2="0" y2="1">
            <stop offset="0.4" stopColor="#fdfdff" />
            <stop offset="1" stopColor="#cfcfdf" />
          </linearGradient>
        </defs>
      </svg>
      <TitleBar />
      <MenuBar />
      <StandardBar />
      <PropertyBar />
      <main className="flex flex-1">
        <Toolbox />
        <Workspace />
        <Docker />
        <Palette />
      </main>
      <StatusBar />
      <div className="flex h-1 items-end justify-end gap-[151px] border-t border-[#4a5d87] bg-[#93a5cb] pr-1">
        <span className="h-px w-[107px] bg-[#4f5b74]" />
        <span className="h-px w-[118px] bg-[#4f5b74]" />
      </div>
    </div>
  );
}
